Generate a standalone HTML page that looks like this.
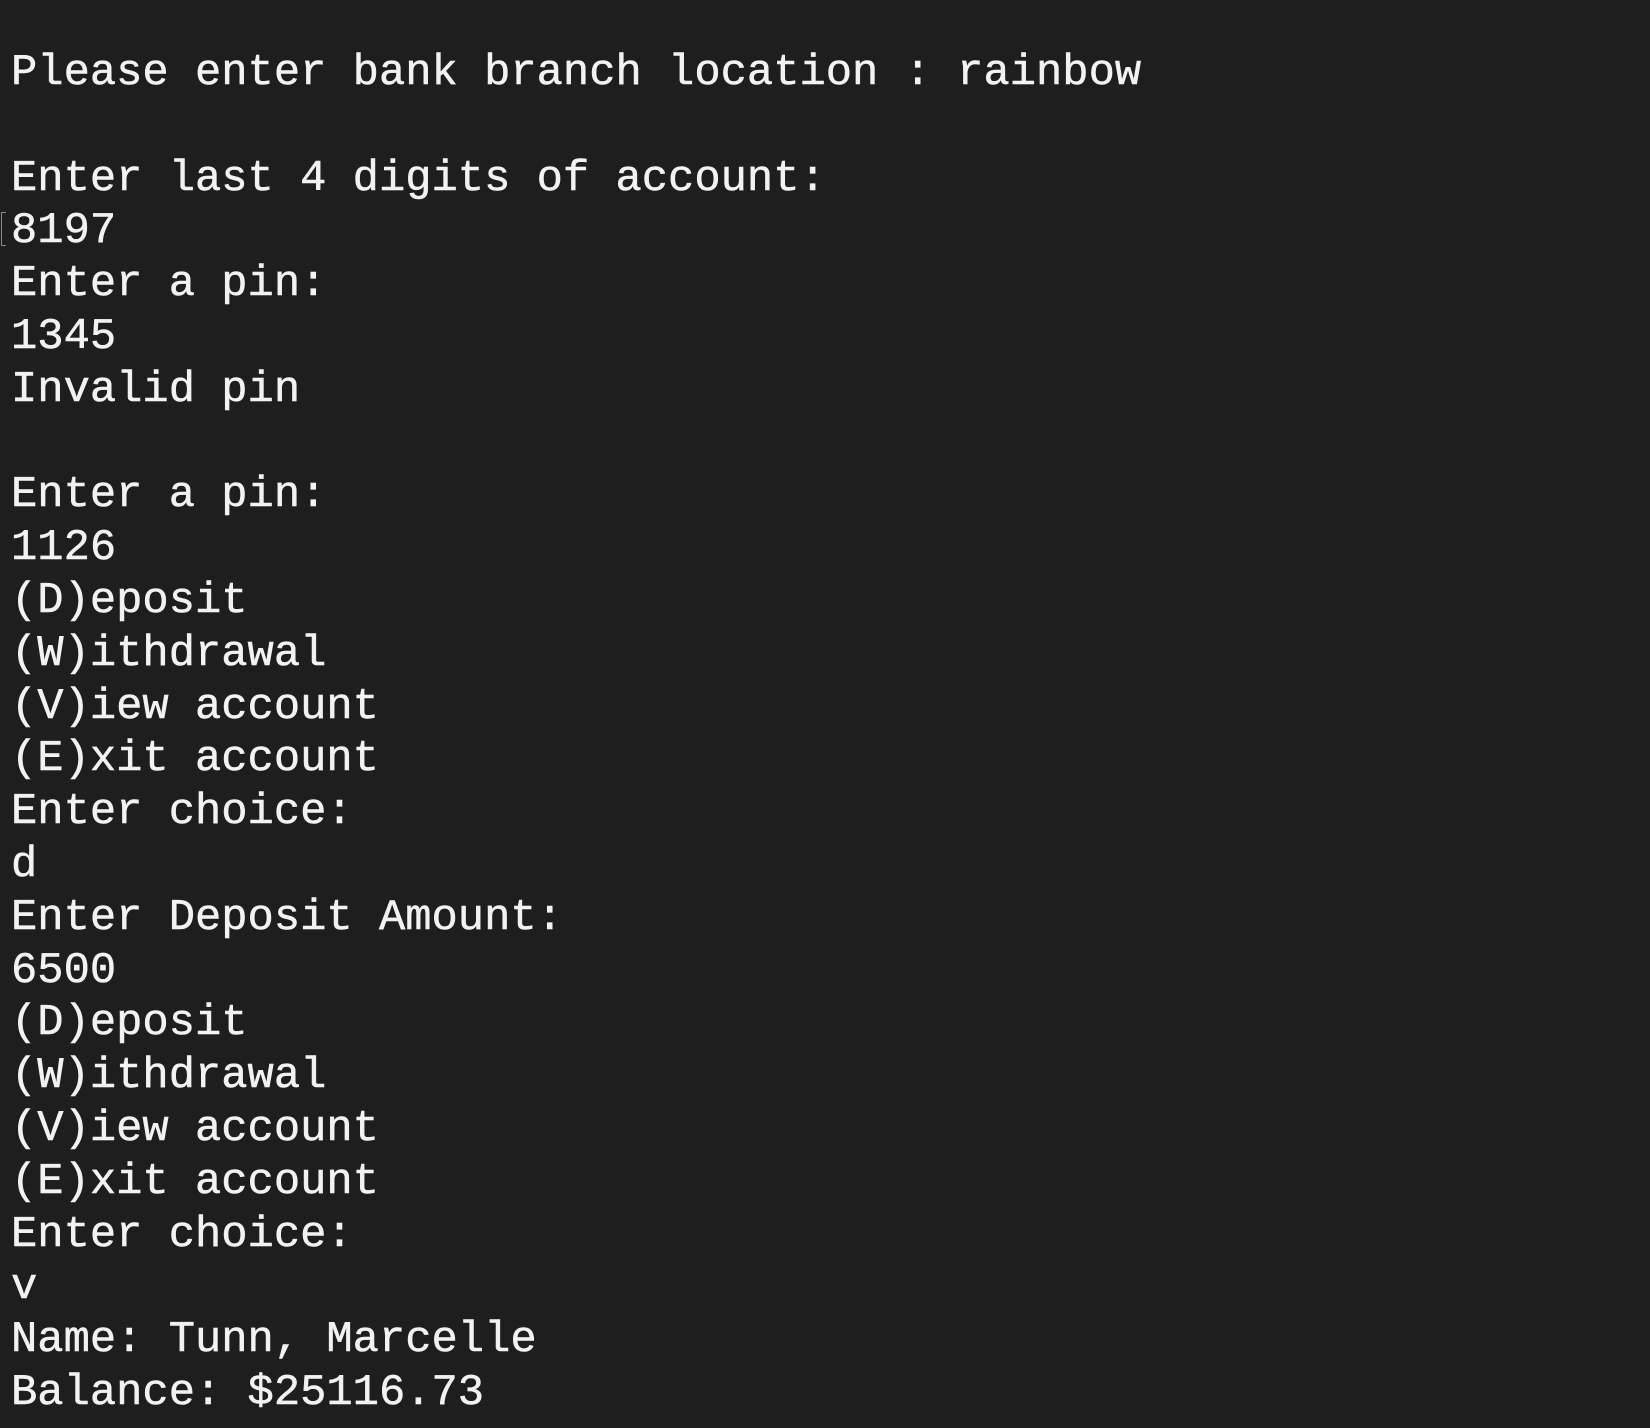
<!DOCTYPE html>
<html><head><meta charset="utf-8"><style>
html,body{margin:0;padding:0;background:#1e1e1e;width:1650px;height:1428px;overflow:hidden}
pre{position:absolute;left:11px;top:48px;margin:0;font-family:"Liberation Mono",monospace;font-size:43.8px;line-height:52.8px;color:#f2f2f2;letter-spacing:0;-webkit-text-stroke:0.5px #f2f2f2}
.cur{position:absolute;left:1px;top:212px;width:4px;height:32px;border:1px solid #888;border-right:none}
</style></head><body>
<div class="cur"></div>
<pre>Please enter bank branch location : rainbow

Enter last 4 digits of account:
8197
Enter a pin:
1345
Invalid pin

Enter a pin:
1126
(D)eposit
(W)ithdrawal
(V)iew account
(E)xit account
Enter choice:
d
Enter Deposit Amount:
6500
(D)eposit
(W)ithdrawal
(V)iew account
(E)xit account
Enter choice:
v
Name: Tunn, Marcelle
Balance: $25116.73</pre>
</body></html>
